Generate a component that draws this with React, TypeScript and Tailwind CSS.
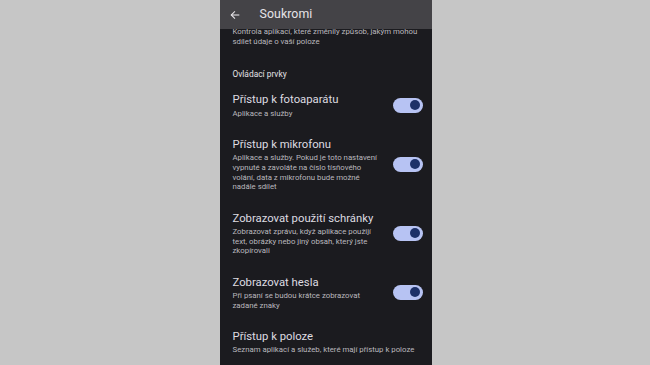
import React from "react";

type Row = { title: string; desc: string[]; toggle?: boolean };

const rows: Row[] = [
  { title: "Přístup k fotoaparátu", desc: ["Aplikace a služby"], toggle: true },
  {
    title: "Přístup k mikrofonu",
    desc: [
      "Aplikace a služby. Pokud je toto nastavení",
      "vypnuté a zavoláte na číslo tísňového",
      "volání, data z mikrofonu bude možné",
      "nadále sdílet",
    ],
    toggle: true,
  },
  {
    title: "Zobrazovat použití schránky",
    desc: [
      "Zobrazovat zprávu, když aplikace použijí",
      "text, obrázky nebo jiný obsah, který jste",
      "zkopírovali",
    ],
    toggle: true,
  },
  {
    title: "Zobrazovat hesla",
    desc: ["Při psaní se budou krátce zobrazovat", "zadané znaky"],
    toggle: true,
  },
  {
    title: "Přístup k poloze",
    desc: ["Seznam aplikací a služeb, které mají přístup k poloze"],
  },
];

function Toggle() {
  return (
    <div className="w-[30px] h-[15px] rounded-full bg-[#b7c3f3] flex items-center justify-end pr-[2.5px] shrink-0">
      <div className="w-[10px] h-[10px] rounded-full bg-[#1d3168]" />
    </div>
  );
}

function SettingRow({ row }: { row: Row }) {
  return (
    <div className="flex items-center py-[9.3px] pl-[13px] pr-[9px]">
      <div className="flex-1 min-w-0">
        <div className="text-[11.3px] leading-[15px] text-[#dedce1]">{row.title}</div>
        <div className="mt-[1.3px] text-[7.8px] leading-[9.7px] text-[#bab8be]">
          {row.desc.map((d, i) => (
            <div key={i} className="whitespace-nowrap">{d}</div>
          ))}
        </div>
      </div>
      {row.toggle && <Toggle />}
    </div>
  );
}

export default function App() {
  return (
    <div
      className="w-[650px] h-[365px] bg-[#c6c6c6] flex justify-center overflow-hidden"
      style={{ fontFamily: "Roboto, 'Noto Sans', sans-serif" }}
    >
      <div className="w-[212px] h-full bg-[#1b1b1f] flex flex-col ml-[1px]">
        <div className="h-[29px] shrink-0 bg-[#444347] flex items-center pl-[10px]">
          <svg width="10" height="10" viewBox="0 0 24 24" fill="none" stroke="#e6e4e8" strokeWidth="2.6" strokeLinecap="square">
            <path d="M21 12H4" />
            <path d="M11 4l-8 8 8 8" />
          </svg>
          <span className="ml-[20px] text-[12.3px] text-[#e6e4e8] tracking-[0.1px]">Soukromi</span>
        </div>
        <div className="flex-1 overflow-hidden">
          <div className="-mt-[2px] pl-[13px] text-[7.8px] leading-[10px] text-[#bab8be]">
            <div className="whitespace-nowrap">Kontrola aplikací, které změnily způsob, jakým mohou</div>
            <div className="whitespace-nowrap">sdílet údaje o vaší poloze</div>
          </div>
          <div className="mt-[21px] pl-[13px] text-[8.4px] leading-[12px] text-[#e4e2e6]">Ovládací prvky</div>
          <div className="mt-[3px]">
            {rows.map((r) => (
              <SettingRow key={r.title} row={r} />
            ))}
          </div>
        </div>
      </div>
    </div>
  );
}
